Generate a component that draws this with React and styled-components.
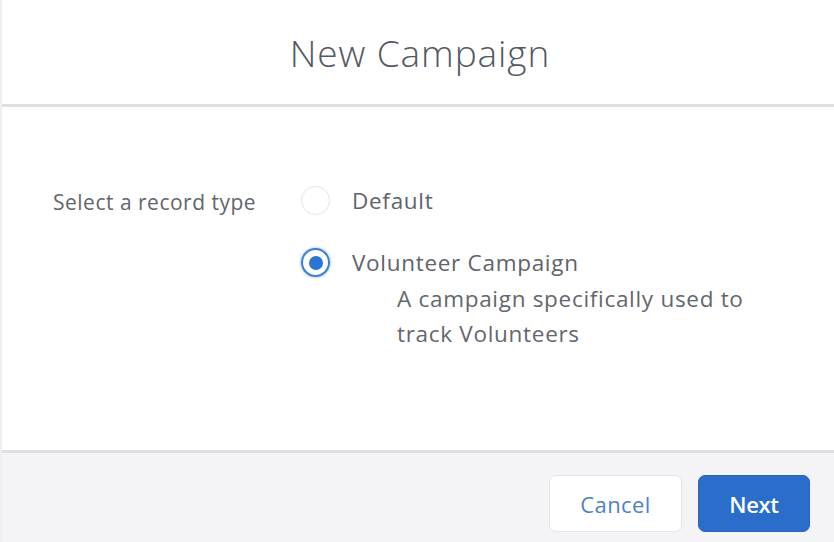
import React from "react";
import styled, { createGlobalStyle } from "styled-components";

const Global = createGlobalStyle`
  html, body { margin: 0; padding: 0; background: #ffffff; }
  body { font-family: "Open Sans", "Liberation Sans", sans-serif; }
  #root { width: 834px; height: 542px; }
`;

const Modal = styled.div`
  width: 834px;
  height: 542px;
  display: flex;
  flex-direction: column;
  background: #ffffff;
  border-left: 2px solid #eeeff1;
  box-sizing: border-box;
  overflow: hidden;
`;

const Header = styled.header`
  height: 104px;
  flex: none;
  display: flex;
  align-items: center;
  justify-content: center;
  border-bottom: 3px solid #dcdfe4;
`;

const Title = styled.h1`
  margin: 0;
  font-family: "Open Sans", sans-serif;
  font-weight: 300;
  font-size: 37px;
  color: #535862;
  letter-spacing: 0.9px;
  transform: translate(2px, 0);
`;

const Body = styled.main`
  flex: 1;
  display: grid;
  grid-template-columns: 248px 1fr;
  align-content: start;
  padding: 79px 0 0 51px;
`;

const Label = styled.div`
  font-size: 21px;
  letter-spacing: 0.5px;
  color: #62666c;
  padding-top: 2px;
  line-height: 28px;
`;

const Options = styled.div`
  display: flex;
  flex-direction: column;
  gap: 33px;
`;

const Option = styled.label`
  display: grid;
  grid-template-columns: 30px 1fr;
  column-gap: 21px;
  align-items: center;
  cursor: pointer;
`;

const Radio = styled.span`
  width: 29px;
  height: 29px;
  box-sizing: border-box;
  border-radius: 50%;
  border: ${(p) => (p.$checked ? "2px solid #3c7fd4" : "1.5px solid #e6e7ea")};
  box-shadow: ${(p) => (p.$checked ? "0 0 2px 1px rgba(90,150,230,0.35)" : "0 0 1px rgba(0,0,0,0.05)")};
  display: flex;
  align-items: center;
  justify-content: center;
  background: #fff;
  &::after {
    content: "";
    display: ${(p) => (p.$checked ? "block" : "none")};
    width: 14px;
    height: 14px;
    border-radius: 50%;
    background: #2c74d6;
  }
`;

const OptionName = styled.span`
  font-size: 22.5px;
  letter-spacing: 0.7px;
  color: #5f636a;
  line-height: 28px;
`;

const Description = styled.div`
  grid-column: 2;
  margin-left: 45px;
  margin-top: 4px;
  font-size: 22.5px;
  letter-spacing: 0.7px;
  line-height: 35px;
  color: #63676d;
  width: 400px;
`;

const Footer = styled.footer`
  height: 92px;
  flex: none;
  box-sizing: border-box;
  background: #f4f4f7;
  border-top: 3px solid #dcdfe4;
  display: flex;
  justify-content: flex-end;
  align-items: flex-start;
  gap: 16px;
  padding: 22px 24px 0 0;
`;

const Button = styled.button`
  height: 57px;
  border-radius: 7px;
  font-family: "Open Sans", sans-serif;
  font-size: 22px;
  padding: 0;
  width: ${(p) => (p.$primary ? "112px" : "133px")};
  background: ${(p) => (p.$primary ? "#2a6dcb" : "#ffffff")};
  color: ${(p) => (p.$primary ? "#ffffff" : "#4f80c4")};
  border: ${(p) => (p.$primary ? "1px solid #2a66bd" : "1px solid #e3e5ea")};
  font-weight: ${(p) => (p.$primary ? 600 : 400)};
  letter-spacing: ${(p) => (p.$primary ? "-0.3px" : "0.4px")};
`;

export default function App() {
  return (
    <>
      <Global />
      <Modal>
        <Header>
          <Title>New Campaign</Title>
        </Header>
        <Body>
          <Label>Select a record type</Label>
          <Options>
            <Option>
              <Radio />
              <OptionName>Default</OptionName>
            </Option>
            <Option>
              <Radio $checked />
              <OptionName>Volunteer Campaign</OptionName>
              <Description>
                A campaign specifically used to
                <br />
                track Volunteers
              </Description>
            </Option>
          </Options>
        </Body>
        <Footer>
          <Button>Cancel</Button>
          <Button $primary>Next</Button>
        </Footer>
      </Modal>
    </>
  );
}
